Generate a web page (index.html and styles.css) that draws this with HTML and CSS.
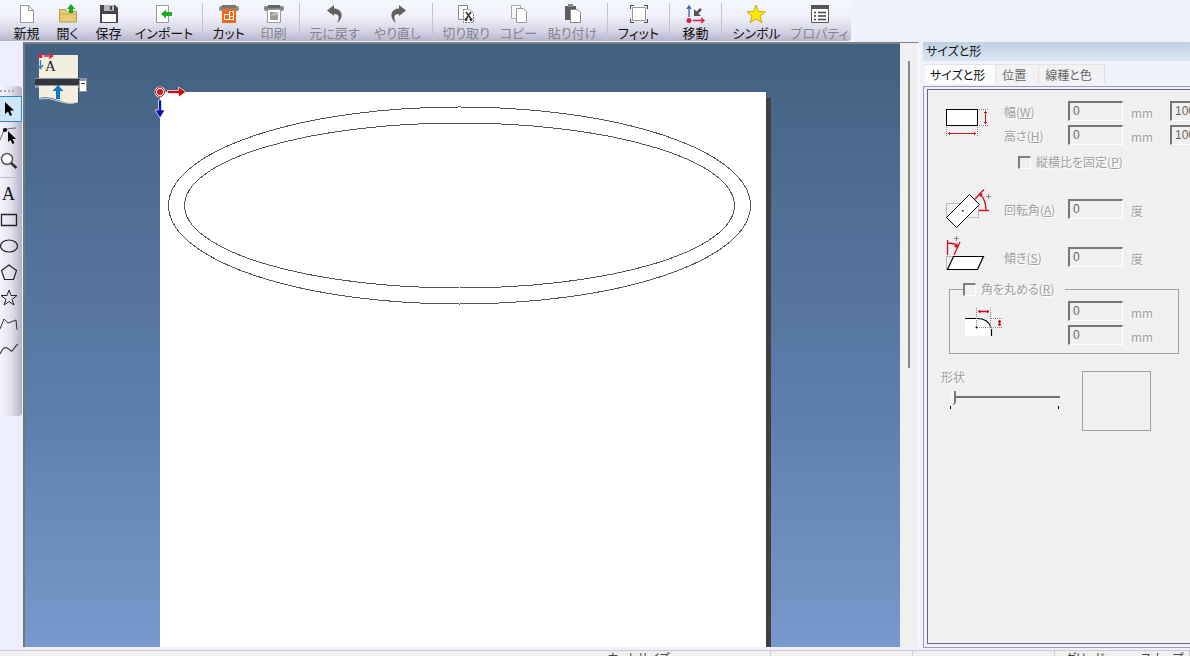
FILE: index.html
```html
<!DOCTYPE html>
<html lang="ja">
<head>
<meta charset="utf-8">
<title>サイズと形</title>
<link rel="stylesheet" href="styles.css">
</head>
<body>
<header class="top">
<div class="toolbar" role="toolbar">
  <button class="tb"><svg width="20" height="20" viewBox="0 0 20 20"><path d="M3.500 1.500h8l5 5v12h-13z" fill="#fff" stroke="#999"/><path d="M11.500 1.500v5h5" fill="none" stroke="#999"/></svg>新規</button>
  <button class="tb"><svg width="20" height="20" viewBox="0 0 20 20"><path d="M1.500 18V5.500h6l2 2h9V18z" fill="#e9cc72" stroke="#b39a4c"/><path d="M2 10h16" stroke="#c5a956"/><path d="M13 0l4 5h-2v4h-4V5H9z" fill="#19a91f"/></svg>開く</button>
  <button class="tb"><svg width="20" height="20" viewBox="0 0 20 20"><path d="M1 1h15l3 3v15H1z" fill="#46464b"/><path d="M5 1h10v6H5z" fill="#b9b9bd"/><path d="M11 2h2v4h-2z" fill="#46464b"/><path d="M3 10h14v8H3z" fill="#fff"/></svg>保存</button>
  <button class="tb tb-wide"><svg width="20" height="20" viewBox="0 0 20 20"><path d="M2.500 1.500h12v17h-12z" fill="#fff" stroke="#999"/><path d="M7 10l5-4.500V8h6v4h-6v2.500z" fill="#1cab22"/></svg>インポート</button>
  <span class="sep"></span>
  <button class="tb tb-mid"><svg width="20" height="20" viewBox="0 0 20 20"><rect x="0" y="2" width="20" height="5" rx="2" fill="#8a8a8a"/><path d="M3 1h14v3H3z" fill="#777"/><path d="M3 5h14v14H3z" fill="#eb6a1b"/><path d="M5.500 10.500h5v5h-5zM10.500 7.500h4v5h-4z" fill="none" stroke="#fff"/><path d="M10.500 15.500h4v-3" fill="none" stroke="#fff"/></svg>カット</button>
  <button class="tb tb-mid off"><svg width="20" height="20" viewBox="0 0 20 20"><rect x="0" y="2" width="20" height="5" rx="2" fill="#858585"/><path d="M4 1h12v3H4z" fill="#666"/><path d="M3.500 5.500h13v13h-13z" fill="#fff" stroke="#999"/><path d="M6 8h8v8H6z" fill="#999"/><path d="M6 12l4-4h4v3z" fill="#bbb"/></svg>印刷</button>
  <span class="sep"></span>
  <button class="tb tb-long off"><svg width="20" height="20" viewBox="0 0 20 20"><path d="M2 6.500L9 1v3.500c9 0 10 10 3 14.500 3-6 2-9-3-9V12z" fill="#626262"/></svg>元に戻す</button>
  <button class="tb tb-long off"><svg width="20" height="20" viewBox="0 0 20 20"><path d="M18 6.500L11 1v3.500c-9 0-10 10-3 14.500-3-6-2-9 3-9V12z" fill="#626262"/></svg>やり直し</button>
  <span class="sep"></span>
  <button class="tb tb-edit off"><svg width="20" height="20" viewBox="0 0 20 20"><path d="M2.500 1.500h9v14h-9z" fill="#fff" stroke="#888"/><path d="M7.500 5.500h6l4 4v9h-10z" fill="#fff" stroke="#777" stroke-dasharray="2 1"/><path d="M10 8l5 7M15 8l-5 7" stroke="#333" stroke-width="1.500"/><circle cx="10" cy="15.500" r="1.500" fill="#333"/><circle cx="15" cy="15.500" r="1.500" fill="#333"/></svg>切り取り</button>
  <button class="tb tb-mid off"><svg width="20" height="20" viewBox="0 0 20 20"><path d="M2.500 1.500h9v13h-9z" fill="#f5f5fb" stroke="#aaa"/><path d="M7.500 4.500h7l3 3v11h-10z" fill="#fff" stroke="#999"/></svg>コピー</button>
  <button class="tb tb-long off"><svg width="20" height="20" viewBox="0 0 20 20"><path d="M2 2h11v14H2z" fill="#5c5c5c"/><path d="M5 0h5v3H5z" fill="#888"/><path d="M7.500 5.500h7l3 3v10h-10z" fill="#fff" stroke="#888"/></svg>貼り付け</button>
  <span class="sep"></span>
  <button class="tb tb-fit"><svg width="20" height="20" viewBox="0 0 20 20"><path d="M3.500 3.500h13v13h-13z" fill="#fff" stroke="#999"/><path d="M1.500 5V1.500H5M15 1.500h3.500V5M18.500 15v3.500H15M5 18.500H1.500V15" fill="none" stroke="#444"/></svg>フィット</button>
  <span class="sep"></span>
  <button class="tb tb-mid"><svg width="20" height="20" viewBox="0 0 20 20"><path d="M3 13V3M1 5l2-3 2 3" fill="none" stroke="#315db8" stroke-width="1.300"/><path d="M15 5l-5 5" stroke="#555" stroke-width="2.500"/><path d="M8 5v7h7z" fill="#555"/><circle cx="3" cy="16.500" r="2.500" fill="#df1c40"/><path d="M7 16.500h11M15 14l3 2.500-3 2.500" fill="none" stroke="#df1c40" stroke-width="1.300"/></svg>移動</button>
  <span class="sep"></span>
  <button class="tb tb-long"><svg width="20" height="20" viewBox="0 0 20 20"><path d="M9 1l2.500 6.500 7 .3-5.500 4.300 2 6.700-6-3.900-6 3.900 2-6.700L0 7.800l6.500-.3z" fill="#ffeb00" stroke="#c2aa24"/></svg>シンボル</button>
  <button class="tb tb-long off"><svg width="20" height="20" viewBox="0 0 20 20"><path d="M1.500 1.500h17v17h-17z" fill="#fff" stroke="#555"/><path d="M1 1h18v4H1z" fill="#555"/><path d="M4 8.500h2M4 12h2M4 15.500h2M8 8.500h8M8 12h8M8 15.500h8" stroke="#444" stroke-width="1.600"/></svg>プロパティ</button>
</div>
</header>
<main class="work">
  <nav class="side">
    <div class="strip">
      <span class="grip"></span>
      <button class="tool on" aria-label="選択"><svg width="18" height="20" viewBox="0 0 18 20"><path d="M5 3v12l3-2.500 2 4.500 2-1-2-4.500h4z"/></svg></button>
      <button class="tool" aria-label="点編集"><svg width="18" height="20" viewBox="0 0 18 20"><path d="M0 15L4 5q5-2 12-2" fill="none" stroke="#666"/><circle cx="5" cy="5" r="2"/><path d="M8 6v11l2.500-2 2 4 2-1-2-4h3.500z"/></svg></button>
      <button class="tool" aria-label="ズーム"><svg width="18" height="20" viewBox="0 0 18 20"><circle cx="7" cy="8" r="5.500" fill="#fff" stroke="#555" stroke-width="1.500"/><path d="M11 12l5.500 5" stroke="#333" stroke-width="2.500"/></svg></button>
      <span class="rule"></span>
      <button class="tool glyph" aria-label="文字">A</button>
      <button class="tool" aria-label="四角形"><svg width="18" height="20" viewBox="0 0 18 20"><path d="M1.500 4.500h15v11h-15z" fill="none" stroke="#222" stroke-width="1.300"/></svg></button>
      <button class="tool" aria-label="楕円"><svg width="18" height="20" viewBox="0 0 18 20"><ellipse cx="9" cy="10" rx="8.500" ry="6" fill="none" stroke="#222" stroke-width="1.200"/></svg></button>
      <button class="tool" aria-label="多角形"><svg width="18" height="20" viewBox="0 0 18 20"><path d="M9 3l7.500 5.500-3 9h-9l-3-9z" fill="none" stroke="#222" stroke-width="1.200"/></svg></button>
      <button class="tool" aria-label="星形"><svg width="18" height="20" viewBox="0 0 18 20"><path d="M9 2l2 5.500h6l-5 4 2 5.500-5-3.500L4 17l2-5.500-5-4h6z" fill="none" stroke="#222"/></svg></button>
      <button class="tool" aria-label="折れ線"><svg width="18" height="20" viewBox="0 0 18 20"><path d="M0 15l4-10 4 4 8-3 1 10" fill="none" stroke="#333"/></svg></button>
      <button class="tool" aria-label="曲線"><svg width="18" height="20" viewBox="0 0 18 20"><path d="M0 14C3 8 4 7 7 8s4 5 6 2 3-5 5-6" fill="none" stroke="#333" stroke-width="1.200"/></svg></button>
    </div>
  </nav>
  <section class="canvas">
    <div class="sheet">
      <svg class="shapes" width="606" height="220" viewBox="0 0 606 220" shape-rendering="crispEdges"><g fill="none" stroke="#555"><ellipse cx="299.500" cy="113.500" rx="291" ry="98.500"/><ellipse cx="299.500" cy="113.500" rx="275" ry="82.500"/></g></svg>
    </div>
    <svg class="origin" width="34" height="34" viewBox="0 0 34 34"><circle cx="7" cy="7" r="5.500" fill="#fff"/><circle cx="7" cy="7" r="4.500" fill="#fff" stroke="#b81414"/><circle cx="7" cy="7" r="3" fill="#d01414"/><path d="M14.500 5.500h11v-3.500l7.500 5-7.500 5V8.500h-11z" fill="#c80a0a" stroke="#fff" stroke-width=".7"/><path d="M5.500 15h3v10h3.500l-5 8-5-8h3.500z" fill="#0c12a8" stroke="#fff" stroke-width=".7"/></svg>
    <svg class="feed" width="54" height="54" viewBox="0 0 54 54"><path d="M5 4h39v47q-8 3-20-2-9-4-19-2z" fill="#f2efe0"/><path d="M44.500 4v47" stroke="#3e4c5c"/><path d="M5 48q10-2 19 2 12 4 20 1" fill="none" stroke="#d5d6d0"/><path d="M1 27h52v10H1z" fill="#8997a8"/><path d="M5 35h39v4H5z" fill="#f2efe0"/><path d="M1 28h45v6H1z" fill="#33343c"/><path d="M45.500 29.500h7v11h-7z" fill="#fff" stroke="#999"/><path d="M47 32.500h4" stroke="#333"/><path d="M24 34l5.500 6H26v8h-4v-8h-3.500z" fill="#1475c4"/><circle cx="6.500" cy="5" r="2.200" fill="#e3213a"/><path d="M10 5h8M15 2.500l3.500 2.500-3.500 2.500" fill="none" stroke="#e3213a" stroke-width="1.500"/><path d="M6.500 9v8M4 14l2.500 3.500L9 14" fill="none" stroke="#3a7fb5" stroke-width="1.300"/><text x="11" y="20" font-family="Liberation Serif" font-size="15" fill="#222">A</text></svg>
  </section>
  <div class="scroll"><div class="thumb"></div></div>
  <aside class="panel">
    <h1 class="title">サイズと形</h1>
    <div class="tabs" role="tablist">
      <button class="tab cur" role="tab" aria-selected="true">サイズと形</button><button class="tab" role="tab">位置</button><button class="tab" role="tab">線種と色</button>
    </div>
    <div class="frame"><form class="form">
      <div class="row size">
        <svg class="pic tall" width="44" height="44" viewBox="0 2 44 44" shape-rendering="crispEdges"><path d="M.5 10.500h31v16H.5z" fill="#fff" stroke="#000"/><path d="M33 10.500h9M33 26.500h9M.5 28v9M31.500 28v9" stroke="#888" stroke-dasharray="1 1"/><path d="M39.500 12v13M2 34.500h28M38 13.500h3M38 23.500h3M3.500 33v3M28.500 33v3" stroke="#d0101c"/></svg>
        <label for="w">幅(<u>W</u>)</label><input class="num" id="w" value="0" disabled><span>mm</span><input class="num" aria-label="幅 %" value="100" disabled>
        <label for="h">高さ(<u>H</u>)</label><input class="num" id="h" value="0" disabled><span>mm</span><input class="num" aria-label="高さ %" value="100" disabled>
      </div>
      <label class="check keep"><input type="checkbox" disabled>縦横比を固定(<u>P</u>)</label>
      <div class="row turn">
        <svg class="pic" width="48" height="42" viewBox="0 0 48 42"><path d="M.5 15.500h32v14H.5z" fill="none" stroke="#888" stroke-dasharray="1 1"/><path d="M.5 29.500l23-23 10 10-23 23z" fill="#fff" stroke="#000"/><path d="M16 22h1.500v1.500H16z"/><path d="M29 11L38 1.500M34 6q6 6 6 16M33 22.500h10" fill="none" stroke="#d0101c" stroke-width="1.300"/><path d="M33 5l4 1-3 3z" fill="#d0101c"/><path d="M40 8.500h5M42.500 6v5" stroke="#888"/></svg>
        <label for="r">回転角(<u>A</u>)</label><input class="num" id="r" value="0" disabled><span>度</span>
      </div>
      <div class="row turn">
        <svg class="pic" width="48" height="42" viewBox="0 1 48 42"><path d="M.5 21.500h8M.5 21.500v13" stroke="#888" stroke-dasharray="1 1"/><path d="M1.500 34.500l6-13h30l-6 13z" fill="#fff" stroke="#000" stroke-width="1.200"/><path d="M1.500 20V5M8 20l6-13M2 8q6 0 10 3" fill="none" stroke="#d0101c" stroke-width="1.300"/><path d="M12 13l-4-1 3-4z" fill="#d0101c"/><path d="M8 3.500h5M10.500 1v5" stroke="#888"/></svg>
        <label for="s">傾き(<u>S</u>)</label><input class="num" id="s" value="0" disabled><span>度</span>
      </div>
      <fieldset class="round">
        <legend><label class="check"><input type="checkbox" disabled>角を丸める(<u>R</u>)</label></legend>
        <svg class="pic tall" width="40" height="32" viewBox="0 0 40 32"><path d="M0 12h12q14 0 14 12v5H0z" fill="#fff"/><path d="M0 11.500h12q11 0 14 9M26.500 22v7" fill="none" stroke="#000" stroke-width="1.200"/><path d="M11.500 1v19M25.500 1v19M12 20.500h26M26 11.500h12" stroke="#888" stroke-dasharray="1 1"/><path d="M13 4.500h11M34.500 13v6M15 3v3M22.500 3v3M33 14.500h3M33 17.500h3" stroke="#d0101c" stroke-width="1.300"/><circle cx="11.500" cy="20.500" r="1"/></svg>
        <input class="num" aria-label="角の幅" value="0" disabled><span>mm</span>
        <input class="num" aria-label="角の高さ" value="0" disabled><span>mm</span>
      </fieldset>
      <div class="shape">
        <div class="slide"><label for="k">形状</label><input id="k" type="range" value="0" disabled><div class="ticks"></div></div>
        <div class="preview"></div>
      </div>
    </form></div>
  </aside>
</main>
<footer class="status"><span class="cell c1">カットサイズ</span><span class="cell c2"></span><span class="cell c2"></span><span class="cell c3"><span>グリッド</span><span>スナップ</span></span></footer>
</body>
</html>
```

FILE: styles.css
```css
* { box-sizing: border-box; }
body {
  margin: 0;
  height: 100vh;
  overflow: hidden;
  display: flex;
  flex-direction: column;
  background: #eff2fd;
  color: #111;
  font: 13px/16px "Noto Sans CJK JP", sans-serif;
  font-feature-settings: "palt";
}
button { border: 0; padding: 0; background: none; font: inherit; color: inherit; white-space: nowrap; }
svg { display: block; flex: none; }

.top { flex: none; height: 42px; display: flex; }
.toolbar {
  display: flex;
  height: 41px;
  padding-left: 6px;
  border-radius: 0 2px 4px 0;
  background: linear-gradient(#f5f7fe, #f0f1fa 40%, #d5d5e5 75%, #b5b4cb);
}
.tb { width: 41px; display: flex; flex-direction: column; align-items: center; gap: 1px; padding-top: 4px; }
.tb-wide { width: 70px; }
.tb-mid { width: 45px; }
.tb-long { width: 63px; }
.tb-edit { width: 60px; }
.tb-fit { width: 55px; }
.off { color: #85858b; }
.sep { width: 1px; margin: 3px 3px 2px; background: #c3c3d0; }

.work { flex: 1; min-height: 0; display: flex; }
.side { width: 23px; padding-top: 44px; background: #eceefc; flex: none; }
.strip {
  width: 22px;
  height: 330px;
  border-radius: 0 4px 4px 0;
  background: linear-gradient(90deg, #f3f4fc, #e2e2ee 50%, #b1b1c5);
}
.grip { display: block; height: 10px; width: 16px; background: repeating-linear-gradient(90deg, #aaa 0 2px, transparent 2px 4px) 0 4px / 16px 2px no-repeat; }
.tool { display: flex; width: 22px; height: 26px; align-items: center; }
.on { background: #cfe5f8; border: 1px solid #2e8bd0; border-left: 0; }
.rule { display: block; height: 1px; margin: 3px 0; background: #bcbccb; }
.glyph { font: 18px/26px "Liberation Serif", serif; padding-left: 2px; }

.canvas {
  flex: 1;
  position: relative;
  overflow: hidden;
  border-top: 2px solid #7b8087;
  border-left: 2px solid #70767c;
  background: linear-gradient(#426180, #5e7fae 62%, #7998cb);
  margin-bottom: 3px;
}
.sheet { position: absolute; left: 135px; top: 48px; bottom: 0; width: 606px; background: #fff; box-shadow: 5px 6px 0 #404040; }
.shapes { overflow: visible; }
.origin { position: absolute; left: 128px; top: 41px; }
.feed { position: absolute; left: 9px; top: 7px; }
.scroll { flex: none; width: 19px; background: #f0f0f0; border-top: 1px solid #808080; border-right: 1px solid #fff; margin-bottom: 3px; padding: 18px 0 0 8px; }
.thumb { width: 2px; height: 307px; background: #858585; }

.panel { flex: none; width: 267px; margin: 0 0 2px 4px; display: flex; flex-direction: column; overflow: hidden; }
.title { margin: 0; padding: 0 3px; height: 19px; font-size: 12px; font-weight: 400; line-height: 18px; background: linear-gradient(#bfd0e1, #dbe6f3); flex: none; }
.tabs { display: flex; height: 25px; padding: 3px 0 2px 2px; flex: none; }
.tab { padding: 0 12px 0 6px; border: 1px solid #e6e2e0; border-left: 0; border-bottom: 0; background: #f2f2f5; color: #666; font-size: 12px; }
.cur { background: #fcfcfc; color: #111; padding: 0 10px 0 5px; }
.frame { flex: 1; border: 1px solid #9a9aae; border-right: 0; padding: 2px 0 3px 3px; min-height: 0; }
.form { height: 100%; border: 1px solid #65657c; border-right: 0; background: #f0f0f0; padding: 11px 0 0 18px; color: #a0a0a0; text-shadow: 1px 1px #fff; font-size: 12px; overflow: hidden; }
.row { display: grid; grid-template-columns: 58px 64px 55px 47px 55px; align-items: center; }
.row span, .round span { padding-left: 8px; padding-top: 4px; }
.size { grid-template-rows: 20px 20px; row-gap: 4px; }
.tall { grid-row: 1 / 3; }
.num { width: 55px; height: 20px; border: 1px solid #fff; border-top: 2px solid #777; border-left: 2px solid #777; background: #f0f0f0; padding: 0 0 2px 3px; font: 12px/14px "Liberation Sans", sans-serif; color: #666; border-radius: 0; }
.row label { padding-top: 2px; }
.check { display: flex; align-items: center; }
.check input { appearance: none; width: 13px; height: 13px; margin: 0 5px 0 0; border: 1px solid #fff; border-top: 2px solid #808080; border-left: 2px solid #808080; background: #f0f0f0; flex: none; }
.keep { margin: 9px 0 15px 72px; }
.turn { height: 48px; }
.round { display: grid; grid-template-columns: 103px 55px 50px; grid-template-rows: 20px 20px; row-gap: 4px; align-items: center; margin: 0 11px 0 3px; height: 73px; border: 1px solid #a0a0a0; padding: 4px 0 0 15px; }
.round legend { padding: 0 10px 0 0; margin-left: -2px; }
.shape { display: flex; margin-top: 17px; }
.slide { width: 136px; margin-left: -5px; }
.slide label { display: block; line-height: 12px; }
.slide input { appearance: none; display: block; width: 110px; height: 14px; margin: 8px 0 0 9px; background: linear-gradient(#707070, #707070) 0 5px / 100% 2px no-repeat; }
.slide input::-webkit-slider-thumb { appearance: none; width: 6px; height: 14px; background: #f4f4f4; border-right: 2px solid #777; border-bottom-right-radius: 4px; }
.ticks { width: 109px; height: 3px; margin: 1px 0 0 9px; border-left: 1px solid #000; border-right: 1px solid #000; }
.preview { width: 69px; height: 60px; margin-left: 5px; border: 1px solid #a0a0a0; }

.status { flex: none; height: 6px; display: flex; background: #f0f0f0; border-top: 1px solid #ccc; overflow: hidden; font-size: 12px; line-height: 14px; color: #444; }
.cell { border-right: 1px solid #ccc; white-space: nowrap; }
.c1 { flex: 1; text-align: right; padding-right: 100px; }
.c2 { width: 142px; }
.c3 { width: 135px; display: flex; gap: 36px; padding-left: 10px; }
```
